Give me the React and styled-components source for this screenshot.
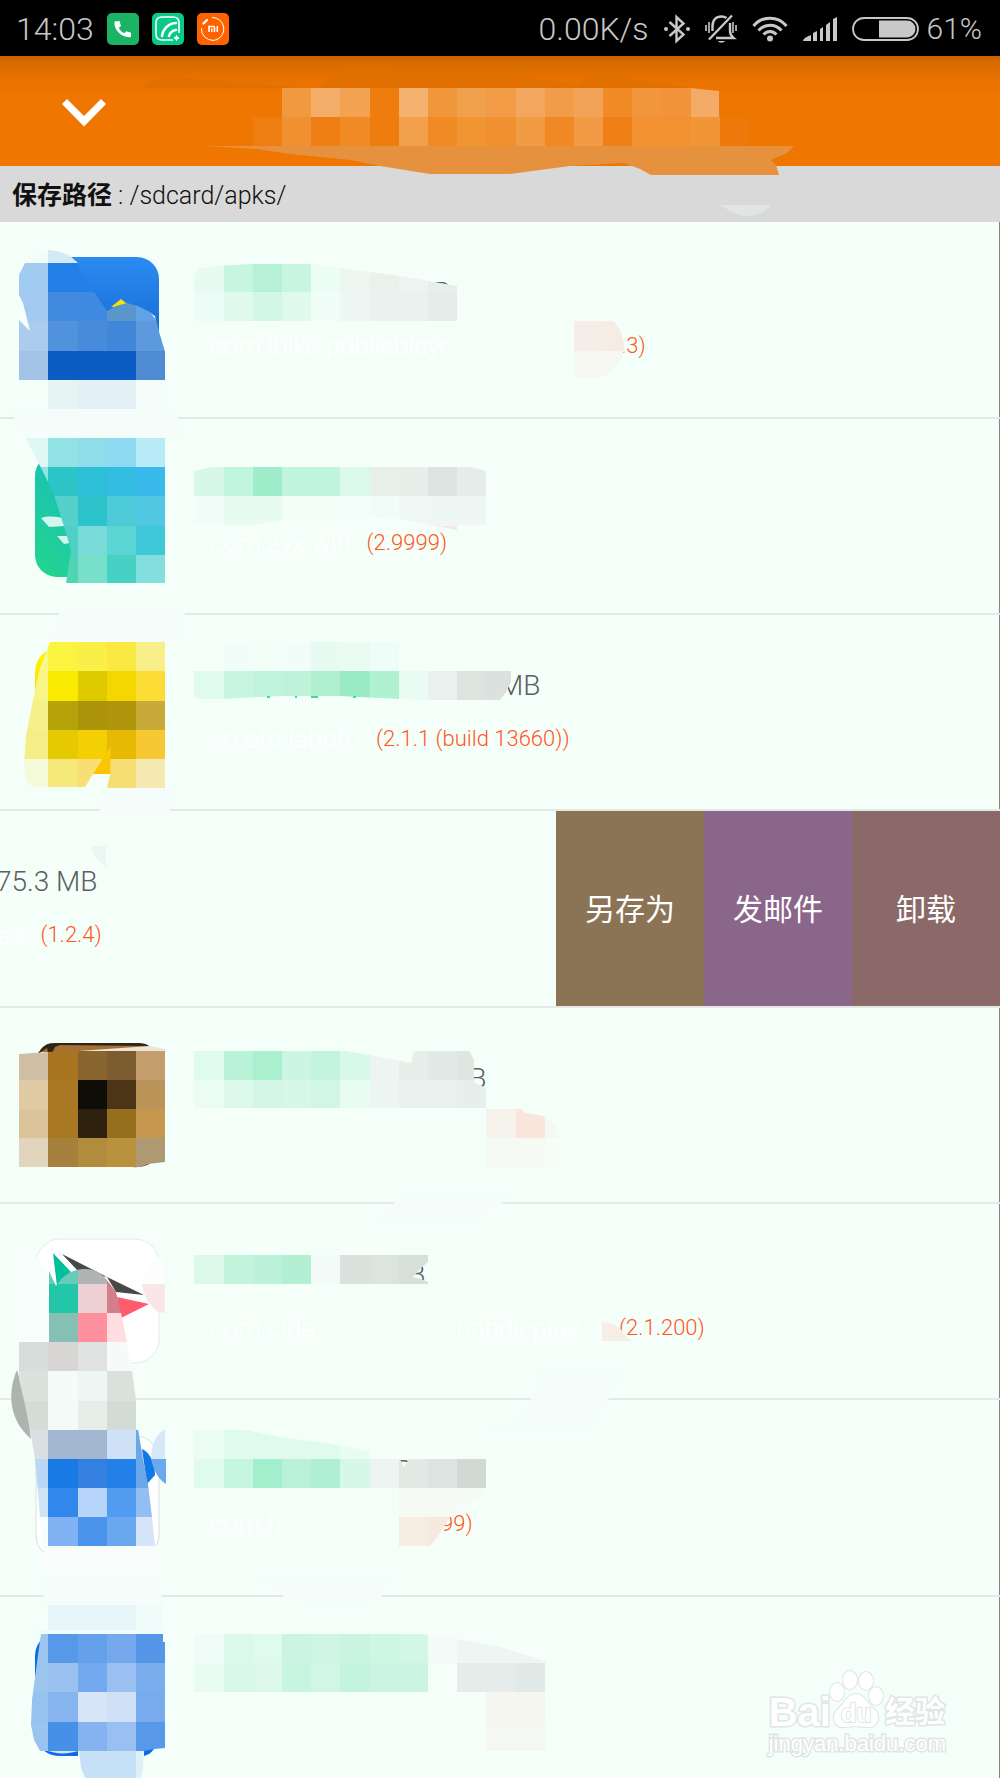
import React, { useId } from "react";
import styled, { createGlobalStyle } from "styled-components";

const GlobalStyle = createGlobalStyle`
  * { box-sizing: border-box; }
  body { margin: 0; background: #f5fffa; }
  button { border: 0; padding: 0; margin: 0; font: inherit; cursor: pointer; }
`;

const Screen = styled.div`
  position: relative;
  display: flex;
  flex-direction: column;
  height: 100vh;
  overflow: hidden;
  background: #f5fffa;
  font-family: Roboto, "Noto Sans CJK SC", sans-serif;
  font-weight: 300;
`;

const StatusBar = styled.div`
  flex: none;
  display: flex;
  align-items: center;
  justify-content: space-between;
  height: 56px;
  padding: 2px 18px 0 16px;
  background: #000;
  color: #c8c8c8;
  font-size: 32px;
  line-height: 36px;
  font-weight: 300;
`;

const StatusGroup = styled.div`
  display: flex;
  align-items: center;
  gap: ${(p) => p.$gap}px;
  svg { display: block; flex: none; }
`;

const Battery = styled.span`
  display: flex;
  align-items: center;
  gap: 8px;
  font-size: 30px;
`;

const AppBar = styled.header`
  position: relative;
  flex: none;
  display: flex;
  align-items: center;
  height: 110px;
  padding: 4px 40px 0;
  background: linear-gradient(#c96100 0, #d86b00 6px, #e77200 24px, #ef7600 40px);
`;

const CollapseButton = styled.button`
  display: grid;
  place-items: center;
  width: 88px;
  height: 72px;
  background: transparent;
`;

const PathBar = styled.p`
  flex: none;
  margin: 0;
  height: 56px;
  padding: 0 12px;
  background: #d9d9d9;
  color: #111;
  font-size: 25px;
  line-height: 60px;
  b { font-weight: 700; }
`;

const List = styled.ul`
  flex: 1;
  min-height: 0;
  margin: 0;
  padding: 0;
  overflow: hidden;
  list-style: none;
`;

const Row = styled.li`
  position: relative;
  display: flex;
  height: 196px;
  border-bottom: 2px solid #e5e8e6;
  box-shadow: ${(p) => (p.$open ? "none" : "inset -1px 0 #8f8175")};
  &:nth-child(3n + 1) { height: 197px; }
`;

const Body = styled.div`
  flex: 1;
  min-width: 0;
  margin-left: ${(p) => (p.$open ? -4 : 0)}px;
  padding: 53px 0 0 ${(p) => (p.$open ? 0 : 210)}px;
  overflow: hidden;
  white-space: nowrap;
`;

const Title = styled.div`
  display: flex;
  height: 36px;
  margin-bottom: 19px;
  color: #5c5f5e;
  font-size: 28px;
  line-height: 36px;
`;

const HiddenName = styled.span`
  flex: none;
  width: ${(p) => p.$width}px;
`;

const Detail = styled.div`
  display: flex;
  gap: 16px;
  height: 32px;
  line-height: 32px;
`;

const Package = styled.span`
  min-width: ${(p) => p.$width || 0}px;
  color: #fff;
  font-size: 26px;
`;

const Version = styled.span`
  color: #ff5722;
  font-size: 22px;
`;

const Actions = styled.div`
  flex: none;
  display: flex;
`;

const Action = styled.button`
  width: 148px;
  padding-bottom: 4px;
  background: ${(p) => p.$color};
  color: #fff;
  font-size: 30px;
  font-weight: 400;
`;

const Overlay = styled.svg`
  position: absolute;
  left: 0;
  top: 0;
  overflow: visible;
  pointer-events: none;
`;

const Watermark = styled.div`
  position: absolute;
  right: 54px;
  bottom: 20px;
  color: #fff;
  font-family: "Liberation Sans", "Noto Sans CJK SC", sans-serif;
  font-weight: 700;
  -webkit-text-stroke: 3px #dfe6e3;
  paint-order: stroke fill;
`;

const WatermarkTop = styled.div`
  display: flex;
  align-items: flex-end;
  height: 60px;
  font-size: 40px;
  line-height: 36px;
  svg { display: block; overflow: visible; }
`;

const WatermarkCjk = styled.span`
  margin-left: 4px;
  font-size: 30px;
`;

const WatermarkUrl = styled.div`
  font-size: 22px;
  line-height: 28px;
  font-weight: 400;
`;

/* Mosaic grid: square cells shared by every censored area of the page */
const colX = (c) => Math.round(19.2 + 29.2 * c);
const rowY = (r) => Math.round(88 + 29.17 * r);

function Mosaic({ rows, clip }) {
  const id = useId();
  return (
    <>
      <clipPath id={id}><path d={clip} /></clipPath>
      <g clipPath={`url(#${id})`} shapeRendering="crispEdges">
        {rows.map(([r, c, colors]) =>
          colors.split(" ").map((color, i) => (
            <rect
              key={`${r}-${i}`}
              x={colX(c + i)}
              y={rowY(r)}
              width={colX(c + i + 1) - colX(c + i)}
              height={rowY(r + 1) - rowY(r)}
              fill={`#${color}`}
            />
          ))
        )}
      </g>
    </>
  );
}

const smear = "#f4fdf9";

const art = {
  header: (
    <>
      <path d="M145 88C152 78 160 77 175 77L280 86L318 90C325 78 338 69 360 70L500 74L578 84C585 76 595 75 605 75L690 88Z" fill="#e27000" />
      <path d="M203 146H794L787 153L771 160L776 165L779 175H651L640 169L624 163L570 166L510 174H430L380 166L350 160L290 154L256 149Z" fill="#e6913e" />
      <Mosaic
        clip="M250 88H690L719 91V117H749V146H250Z"
        rows={[
          [0, 9, "f1993f f4ad68 f2a250 ef7d0e f4b170 f1973b f1a04c f29c48 f3a75e f19c49 f3a357 f08b25 f1963a f19338 f3ac68"],
          [1, 8, "ee7e12 f19030 ef7f12 ef8a25 ee7d0e f2a04c f08a25 f19533 f19030 f29b45 f08924 f29a44 ef8018 f19131 f19131 f19537 ee780a"],
        ]}
      />
      <path d="M720 205H771C764 213 756 216 747 216S730 211 720 205Z" fill="#e1e6e4" />
    </>
  ),
  bike: (
    <>
      <linearGradient id="bikeFill" x2="0" y2="1"><stop stopColor="#2b8bf2" /><stop offset="1" stopColor="#0b5dc3" /></linearGradient>
      <rect x="36" y="257" width="123" height="122" rx="22" fill="url(#bikeFill)" />
      <path d="M111 307L121 299L130 306Z" fill="#f6e500" />
      <path d="M149 312L155 316L156 322Z" fill="#e6f0fa" />
      <Mosaic
        clip="M19 275L25 263L40 252L50 250L61 252L70 256L77 262L85 278L94 292L107 311L116 306L127 303L138 306L150 312L156 320L160 335L166 355V380H19V320L30 331L23 303L19 295Z"
        rows={[
          [5, 0, "f2fcf8 d3e9f6 d3e9f6"],
          [6, 0, "a2cbf2 2380e8 2380e8"],
          [7, 0, "a4c9f0 428adf 3e8ae0 5a96cb 61a1e6"],
          [8, 0, "abccec 5192dc 488bda 4087da 5c9add"],
          [9, 0, "a3c3e6 0b5dc3 0b5dc3 0b5dc3 4f8bd2"],
        ]}
      />
      <Mosaic clip="M48 379H166V409H48Z" rows={[[10, 1, "e6f4f4 e3f0f6 e3f0f6 f4fdfa"]]} />
      <path d="M10 409H177L180 438H25L17 423Z" fill={smear} />
      <Mosaic
        clip="M194 275L200 268L215 266L253 264H311L341 268L400 276L457 286V321H194Z"
        rows={[
          [6, 6, "e8fbf3 c8f5df b6f1d6 c8f5e0 ecfdf6 eef6f2 e9f1ed ecf3f0 e7efeb"],
          [7, 6, "ecfcf6 dff9ed d3f7e6 dff9ed f1fdf8 eff7f4 eaf1ee eaf1ee e5ecea"],
        ]}
      />
      <Mosaic
        clip="M573 321H613C621 328 625 340 624 351C619 369 606 379 590 378L573 377Z"
        rows={[[8, 19, "f5ede8 f6ece3"], [9, 19, "f6f7f1 f6f7f1"]]}
      />
    </>
  ),
  wifi: (
    <>
      <linearGradient id="wifiFill" x1="1" x2="0" y2="1"><stop stopColor="#18bcc8" /><stop offset=".5" stopColor="#19c3b0" /><stop offset="1" stopColor="#24d68c" /></linearGradient>
      <rect x="35" y="454" width="123" height="123" rx="22" fill="url(#wifiFill)" />
      <path d="M41 518C48 516 56 516 65 519V526L49 527ZM57 536L70 536L70 543L64 544Z" fill="#d5f4ee" />
      <Mosaic
        clip="M25 437L166 438V583H66L71 550L62 520L54 495L48 482L38 462Z"
        rows={[
          [12, 0, "dff8f3 90e2e4 90ddea 8edaf2 b9eaf8"],
          [13, 0, "8fe3e0 2cc4c6 2cbfd6 34bde3 38bbec"],
          [14, 1, "55d1cb 2cc4ca 4dcbd9 50c8e3"],
          [15, 1, "50d0c4 78dbd7 5bd4d4 3ec8d8"],
          [16, 1, "50d4b4 78dfcb 47d1c5 82dfdd"],
        ]}
      />
      <Mosaic
        clip="M194 471L212 467H470L486 471V525H457V530L430 525L400 519L340 516L285 519L253 525H194Z"
        rows={[
          [13, 6, "d7f8e8 c2f5dd a0eec9 c0f4dc c0f4dc dcf9ee e8f0ec e8efeb dbe4e1 e5ece9"],
          [14, 6, "f2fdf9 e7fbf2 e7fbf2 f3fef9 f3fef9 f3fdf9 f1fbf8 f0f8f5 eff7f4 eff7f4"],
          [15, 14, "fae8e0"],
        ]}
      />
      <path d="M59 613H185L178 642H50Z" fill={smear} />
    </>
  ),
  yellow: (
    <>
      <linearGradient id="yellowFill" x2="0" y2="1"><stop stopColor="#fff200" /><stop offset="1" stopColor="#fbc300" /></linearGradient>
      <path d="M35 674C35 662 40 654 48 651L111 740V774H80L35 735Z" fill="url(#yellowFill)" />
      <Mosaic
        clip="M50 642H165V788H107L110 775L111 746L100 763L85 787H32L26 780L24 765L26 735L33 700L40 668Z"
        rows={[
          [19, 0, "f8f68c faf33f faee48 fae943 f8ee8a"],
          [20, 0, "f8f488 fae900 dfca00 f4d700 fbdd35"],
          [21, 0, "f6f08a b6a309 ab930a b0940c c8aa38"],
          [22, 0, "f5ee88 e5c902 f4cf03 e6b904 f6c933"],
          [23, 0, "f5fada f6e97b f8df74 f6dd74 f5e8b0"],
        ]}
      />
      <path d="M107 788H176L168 817H97Z" fill={smear} />
      <path d="M90 846H106V867L95 857Z" fill="#edf6f3" />
      <Mosaic clip="M224 642H399V671H224Z" rows={[[19, 7, "f0fdf8 f3fef9 f0fdf8 e7fbf2 e9fbf3 eefdf7"]]} />
      <Mosaic
        clip="M194 671H511V682L506 692L500 700H428L400 699L340 696H282L220 699L200 699L194 697Z"
        rows={[[20, 6, "dffaee c8f5df c0f4dc bef3da b0f0d1 98ebc2 b0f1d2 e8fcf3 e9f1ef dce4e0 dae1de"]]}
      />
      <path d="M267 697h3M295 697h2M311 697h7M353 697h3" stroke="#3fd894" strokeWidth="2" />
    </>
  ),
  brown: (
    <>
      <path d="M38 1054C42 1046 47 1043 56 1043H136C143 1043 148 1045 152 1049L166 1052H38Z" fill="#a57037" />
      <path d="M38 1054C42 1046 47 1043 56 1043H136C143 1043 147 1044 149 1046L60 1045L55 1047L52 1053H48L47 1048Z" fill="#2e2517" />
      <path d="M78 1051L150 1046L165 1049V1052Z" fill="#ece4d4" />
      <path d="M130 1167C146 1168 150 1164 154 1160Z" fill="#6f5c35" />
      <Mosaic
        clip="M19 1054L48 1052L78 1050H166V1108L165 1162L148 1164L140 1167H19Z"
        rows={[
          [33, 0, "d0bfa4 a97420 8a662f 7d5c30 c49d6d"],
          [34, 0, "e0cba5 a97824 0f0d08 4b3516 ba9458"],
          [35, 0, "dcc49a a97822 2e220e 96701f c6984f"],
          [36, 0, "e1d6bd a6813e b08c3c ba913d ae9973"],
        ]}
      />
      <Mosaic
        clip="M194 1050H340L370 1055L411 1063L413 1054L417 1050H469L474 1060L474 1082L486 1088V1108H194Z"
        rows={[
          [33, 6, "dffaee b8f2d7 aaf0cf cdf5e3 c2f4de d8f9ea ecf5f1 e7efeb e2eae8 dfe6e2"],
          [34, 6, "ebfcf5 dbf8ea d3f6e6 d7f8e9 d2f6e6 e9fcf4 edf5f2 e9f1ee e9f1ee e7efec"],
        ]}
      />
      <Mosaic
        clip="M486 1109H521L526 1113L540 1115C552 1119 560 1129 561 1138L555 1167H486Z"
        rows={[[35, 16, "f6f2ec f8e6dc f5f9f3"], [36, 16, "f5faf4 f5faf4 f5fdf8"]]}
      />
      <path d="M395 1202L405 1196H512L502 1203L470 1226H372Z" fill={smear} />
    </>
  ),
  arrows: (
    <>
      <rect x="36" y="1239" width="123" height="124" rx="24" fill="#fff" stroke="#e3ece8" />
      <path d="M53 1253L71 1272L57 1286Z" fill="#00c09b" />
      <path d="M62 1254L107 1277L144 1295L116 1292L107 1277L78 1271Z" fill="#484848" />
      <path d="M117 1297L149 1304L121 1318Z" fill="#ff5a6e" />
      <path d="M19 1255H34L49 1272V1342H19Z" fill="#f7fefb" />
      <path d="M17 1370C7 1393 9 1420 31 1439L26 1400Z" fill="#aeb3b0" />
      <Mosaic
        clip="M49 1271L56 1286C62 1276 72 1269 85 1269S104 1276 110 1284L116 1292L121 1313L127 1342L132 1371L136 1400V1430H30L24 1400L17 1371L19 1342H49Z"
        rows={[
          [40, 1, "68cbb8 b0b4b3 d1808b"],
          [41, 1, "24c6aa ecd0d4 d1808b"],
          [42, 1, "86bfb3 ff909e ffdde1"],
          [43, 0, "d7dddb d7d6d4 e0e1e1 f8faf9"],
          [44, 0, "dbe2de f4fcf9 edf6f2 dae1dd"],
          [45, 0, "d4dcd8 f2fbf7 e6eeea d3dbd7"],
        ]}
      />
      <path d="M142 1284C145 1270 152 1259 165 1255V1284Z" fill="#fbfefd" />
      <path d="M142 1284H165V1313L158 1312C149 1305 143 1295 142 1284Z" fill="#f8e6e8" />
      <Mosaic
        clip="M194 1254H428V1262L421 1268L413 1277L421 1279L428 1282V1284H194Z"
        rows={[[40, 6, "dbf8e9 c2f4dc bcf2d9 b3f0d3 f2fbf7 dbe2de dce4e0 d7dfdb"]]}
      />
      <path d="M602 1322L613 1324Q621 1328 624 1334L631 1341H602Z" fill="#f5efe8" />
      <path d="M540 1371H625L608 1400L590 1429H472L515 1421L531 1399Z" fill={smear} />
    </>
  ),
  blue: (
    <>
      <rect x="36" y="1436" width="123" height="123" rx="24" fill="#fff" stroke="#d8e0dc" />
      <path d="M142 1449C151 1453 155 1465 155 1475L147 1484Z" fill="#1477e6" />
      <Mosaic
        clip="M30 1429H138L143 1459L148 1484L152 1517L155 1546H43L40 1517L35 1459Z"
        rows={[
          [46, 0, "d8e0e2 a3b8d0 a3b8d0 cfe1f6 6aa8ea"],
          [47, 0, "bad8f5 197ae5 3380e0 2380e8 6aa8ea"],
          [48, 0, "cfe5f7 3187eb b7d4fa 519bf0 91bef3"],
          [49, 0, "f5fdfe 80b2f4 4a94ec 6aa8f0 d5e5f8"],
        ]}
      />
      <path d="M165 1429V1459H151C151 1445 156 1434 165 1429Z" fill="#d6e8f7" />
      <path d="M151 1459H166V1484C160 1480 155 1475 151 1459Z" fill="#6ba9ee" />
      <path d="M43 1546H158V1575H44Z" fill="#f8fdfb" />
      <path d="M44 1575H160L162 1605H44Z" fill={smear} />
      <Mosaic clip="M48 1604H162L163 1634H48Z" rows={[[52, 1, "e6f5f7 e6f5f7 e6f5f7 f0fcfa"]]} />
      <Mosaic
        clip="M194 1429H240L280 1437L325 1443L369 1451V1459H400L404 1467L409 1459H486V1488H194Z"
        rows={[
          [46, 6, "ebfcf5 dffaee dffaee e0faee dffaee e9fcf4"],
          [47, 6, "dffaee c5f5df a4efcb b9f2d8 aff0d2 d7f8e8 edf4f1 e1e9e5 dce3e1 d1d9d5"],
        ]}
      />
      <Mosaic
        clip="M399 1488H486V1496L450 1517L438 1536L430 1546H399Z"
        rows={[[48, 13, "f5faf4 f5faf4 f5fcf8"], [49, 13, "f5ece2 f6e9dd"]]}
      />
      <path d="M252 1575H392L380 1600L360 1604H310L286 1598Z" fill={smear} />
    </>
  ),
  cloud: (
    <>
      <rect x="35" y="1632" width="123" height="124" rx="24" fill="#0b6ce8" />
      <path d="M35 1630H166V1634H35Z" fill="#f0fcfa" />
      <path d="M43 1749H78V1751C66 1755 54 1754 43 1749Z" fill="#d2e3f9" />
      <path d="M78 1749H145V1778H78Z" fill="#f5fffa" />
      <path d="M144 1749L154 1749C151 1753 148 1755 144 1756Z" fill="#0b6ce8" />
      <Mosaic
        clip="M41 1634H163V1642H165V1748L154 1749L144 1751H40L34 1740L31 1725L32 1700L36 1670L38 1655Z"
        rows={[
          [53, 0, "9cc6ef 5799e8 65a1ea 75a9ec 5596e8"],
          [54, 0, "9bc5ee 9bc1f1 72a9ef 9ac0f2 7aadee"],
          [55, 0, "96c3ee 86b4ee d6e6f8 cfe0f7 78abed"],
          [56, 0, "99c4ef 4790e8 84b3ef 9ac0f1 5799e8"],
        ]}
      />
      <Mosaic clip="M79 1750H144L143 1770L140 1780H86L81 1768Z" rows={[[57, 2, "c6e0f5 c6e0f5 dff0f7"]]} />
      <Mosaic
        clip="M194 1634H422L457 1639L500 1647L545 1661V1751H486V1692H194Z"
        rows={[
          [53, 6, "effcf8 dbf9ea dffaee cbf5e2 cff6e4 c9f5e0 cdf6e3 d3f7e7 f2fbf7 eef5f2 eef5f2 eef5f2"],
          [54, 6, "e9fcf4 d9f8e9 dbf8ea c8f5e0 d0f7e5 c5f4de cbf5e2 cbf5e2 f5fffa e5ecea e5ece9 e1eae6"],
          [55, 16, "f6f6f0 f6f6f0"],
          [56, 16, "f4f7f2 f4f7f2"],
        ]}
      />
    </>
  ),
};

const apps = [
  { art: "bike", top: 222, name: 199, size: "MB", packages: [["com.ibike.publicbicyc", 395]], version: ".3)" },
  { art: "wifi", top: 419, packages: [["com.zyx.wifi"]], version: "(2.9999)" },
  { art: "yellow", top: 615, name: 289, size: "MB", packages: [["so.ofo.labofo"]], version: "(2.1.1 (build 13660))" },
  { open: true, size: "75.3 MB", packages: [["ad"]], version: "(1.2.4)" },
  { art: "brown", top: 1008, name: 235, size: "MB", packages: [] },
  { art: "arrows", top: 1204, name: 174, size: "MB", packages: [["com.cida", 230], ["hnhdicplay", 147]], version: "(2.1.200)" },
  { art: "blue", top: 1400, name: 161, size: "MB", packages: [["com.h", 215]], version: "99)" },
  { art: "cloud", top: 1597, packages: [] },
];

const actions = [
  ["另存为", "#8b7355"],
  ["发邮件", "#8b668b"],
  ["卸载", "#8b6969"],
];

function AppRow({ app }) {
  return (
    <Row $open={app.open}>
      <Body $open={app.open}>
        <Title>
          {app.name && <HiddenName $width={app.name} />}
          {app.size}
        </Title>
        <Detail>
          {app.packages.map(([text, width]) => (
            <Package key={text} $width={width}>{text}</Package>
          ))}
          {app.version && <Version>{app.version}</Version>}
        </Detail>
      </Body>
      {app.open && (
        <Actions>
          {actions.map(([label, color]) => (
            <Action key={label} type="button" $color={color}>{label}</Action>
          ))}
        </Actions>
      )}
      {app.art && (
        <Overlay width="1000" height="196" viewBox={`0 ${app.top} 1000 196`} aria-hidden="true">
          {art[app.art]}
        </Overlay>
      )}
    </Row>
  );
}

function NotificationIcons() {
  return (
    <>
      <svg width="32" height="32" viewBox="0 0 32 32">
        <rect width="32" height="32" rx="5" fill="#1bb467" />
        <path d="M7.5 8.5L12.5 8L14 13L11.8 14.8C13 17.5 15 19.3 17.5 20.3L19.3 18.2L24 19.8V24C15 25.5 6.500 17 7.500 8.500Z" fill="#fff" />
      </svg>
      <svg width="32" height="32" viewBox="0 0 32 32" fill="none" stroke="#fff">
        <rect width="32" height="32" rx="5" fill="#08c987" stroke="none" />
        <path d="M21 27H10Q4 27 4 21V10Q4 4 10 4H21Q27 4 27 10V20" strokeWidth="1.6" />
        <path d="M10 23C11 16 16 10.500 24 10M17 23C18 19.500 20 17.500 24 17" strokeWidth="2.600" strokeLinecap="round" />
        <path d="M24.500 22.500l.8 1.700 1.700.8-1.700.8-.8 1.700-.8-1.700-1.700-.8 1.700-.8Z" fill="#fff" strokeWidth="1" />
      </svg>
      <svg width="32" height="32" viewBox="0 0 32 32" fill="none" stroke="#fff">
        <rect width="32" height="32" rx="5" fill="#ff6300" stroke="none" />
        <path d="M15 4.500A11.500 11.500 0 0 1 19 26.900M16 27.400A11.500 11.500 0 0 1 4.500 15" strokeWidth="1" />
        <path d="M20 26.500A11.500 11.500 0 0 1 15 27.400" strokeWidth="1" />
        <path d="M6.500 10.500L10 7" strokeWidth="2.400" strokeLinecap="round" />
        <path d="M12 19V13.500H16.500Q17.500 13.500 17.500 14.500V19M14.800 15.500V19M20.300 13V19" strokeWidth="1.500" />
      </svg>
    </>
  );
}

function SignalIcons() {
  return (
    <>
      <svg width="26" height="30" viewBox="0 0 26 30" fill="none" stroke="#c8c8c8" strokeWidth="2.400">
        <path d="M5.500 8L19.500 20.500L12.500 27V3L19.500 9.500L5.500 22" />
        <circle cx="2" cy="15" r="2" fill="#c8c8c8" stroke="none" />
        <circle cx="24" cy="15" r="2" fill="#c8c8c8" stroke="none" />
      </svg>
      <svg width="32" height="30" viewBox="0 0 32 30" fill="none" stroke="#c8c8c8" strokeWidth="2">
        <path d="M7.500 17V12C7.500 6 11 2.500 16.500 2.500C18.500 2.500 20 3 21.500 4M25 9V17C25 20 26 22 28.500 24H11M4 25.500L27 1.500" strokeWidth="2.400" />
        <path d="M12.500 27H20.500Q16.500 30.500 12.500 27Z" fill="#c8c8c8" stroke="none" />
        <path d="M1 11V17M4 8V19M28 8V19M31 11V17" strokeWidth="1.600" />
      </svg>
      <svg width="36" height="26" viewBox="0 0 36 26" fill="none" stroke="#c8c8c8" strokeWidth="3">
        <path d="M1.500 10C10 -.5 26 -.5 34.500 10M6.500 14.500C12.500 7.500 23.500 7.500 29.500 14.500M11.500 18.500C15.500 14.500 20.500 14.500 24.500 18.500" />
        <circle cx="18" cy="22.500" r="3" fill="#c8c8c8" stroke="none" />
      </svg>
      <svg width="34" height="24" viewBox="0 0 34 24" fill="#c8c8c8">
        <path d="M0 24Q0 21 8 18V24ZM10 24V16L14 14V24ZM17 24V12L20 10V24ZM23 24V8L27 5V24ZM30 24V2L34 0V24Z" />
      </svg>
    </>
  );
}

export default function App() {
  return (
    <Screen>
      <GlobalStyle />
      <StatusBar>
        <StatusGroup $gap={13}>
          <span>14:03</span>
          <NotificationIcons />
        </StatusGroup>
        <StatusGroup $gap={15}>
          <span>0.00K/s</span>
          <SignalIcons />
          <Battery>
            <svg width="67" height="24" viewBox="0 0 67 24" fill="none" stroke="#c8c8c8" strokeWidth="1.800">
              <rect x="1" y="1" width="65" height="22" rx="11" />
              <path d="M27 3.500H55A8.500 8.500 0 0 1 55 20.500H27Z" fill="#c8c8c8" stroke="none" />
            </svg>
            61%
          </Battery>
        </StatusGroup>
      </StatusBar>
      <AppBar>
        <CollapseButton type="button" aria-label="收起">
          <svg width="44" height="28" viewBox="0 0 44 28">
            <path d="M0 5L5 0L22 17L39 0L44 5L22 27.500Z" fill="#fff" />
          </svg>
        </CollapseButton>
        <Overlay width="1000" height="110" viewBox="0 56 1000 110" aria-hidden="true">
          {art.header}
        </Overlay>
      </AppBar>
      <PathBar>
        <b>保存路径</b> : /sdcard/apks/
      </PathBar>
      <List>
        {apps.map((app, i) => <AppRow key={i} app={app} />)}
      </List>
      <Watermark>
        <WatermarkTop>
          <span>Bai</span>
          <svg width="50" height="60" viewBox="0 0 50 60" fill="#fff" stroke="#dfe6e3" strokeWidth="2">
            <ellipse cx="6" cy="22" rx="7" ry="9" />
            <ellipse cx="19" cy="10" rx="7" ry="9" />
            <ellipse cx="35" cy="11" rx="7" ry="9" />
            <ellipse cx="45" cy="26" rx="7" ry="9" />
            <path d="M25 24C34 24 36 34 43 39C51 46 47 58 36 57C28 56 22 56 14 57C3 58 -1 47 7 39C14 33 16 24 25 24Z" />
            <text x="10" y="52" fontSize="25" strokeWidth="2" fill="#fff">du</text>
          </svg>
          <WatermarkCjk>经验</WatermarkCjk>
        </WatermarkTop>
        <WatermarkUrl>jingyan.baidu.com</WatermarkUrl>
      </Watermark>
    </Screen>
  );
}
